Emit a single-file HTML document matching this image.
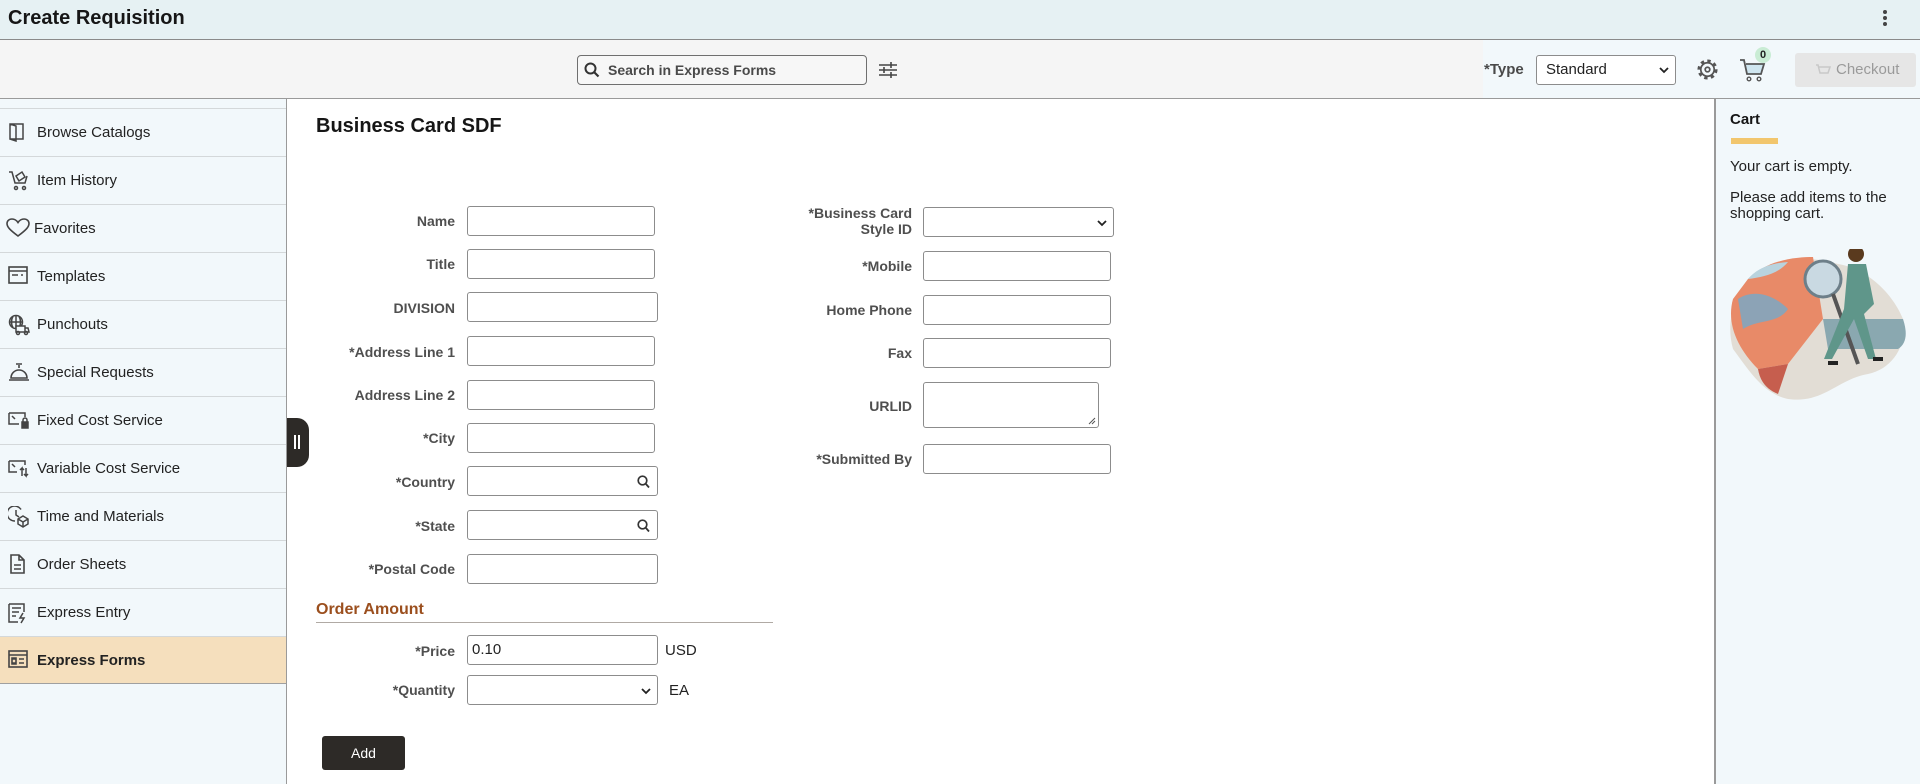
<!DOCTYPE html>
<html><head><meta charset="utf-8"><style>
*{box-sizing:border-box;margin:0;padding:0}
body{width:1920px;height:784px;overflow:hidden;font-family:"Liberation Sans",Arial,sans-serif;background:#fff;position:relative;color:#222}
.a{position:absolute}
#hdr{left:0;top:0;width:1920px;height:40px;background:#e6f1f3;border-bottom:1px solid #8a8a8a}
#tb{left:0;top:40px;width:1920px;height:59px;background:#f5f5f5;border-bottom:1px solid #9a9a9a}
#side{left:0;top:99px;width:287px;height:685px;background:#f2f8fb;border-right:1px solid #9a9a9a}
.it{position:absolute;left:0;width:286px;height:48px;border-top:1px solid #d4d8da;font-size:15px;line-height:47px;padding-left:37px;color:#222}
.it svg{position:absolute;left:8px;top:13px}
.lbl{position:absolute;font-size:14px;font-weight:bold;color:#4f4f4f;text-align:right;width:200px}
.in{position:absolute;height:30px;border:1px solid #8c8c8c;border-radius:3px;background:#fff}
.sel{position:absolute;border:1px solid #8c8c8c;border-radius:3px;background:#fff}
</style></head><body>
<div id="hdr" class="a"><div class="a" style="left:8px;top:7px;font-size:20px;font-weight:bold;color:#161616">Create Requisition</div>
<div class="a" style="left:1883px;top:10px;width:4px"><div style="width:4px;height:4px;border-radius:2px;background:#444;margin-bottom:2px"></div><div style="width:4px;height:4px;border-radius:2px;background:#444;margin-bottom:2px"></div><div style="width:4px;height:4px;border-radius:2px;background:#444"></div></div></div>
<div id="tb" class="a">
<div class="a" style="left:1483px;top:0;width:437px;height:58px;background:#f2f8fb"></div>
<div class="a" style="left:577px;top:15px;width:290px;height:30px;border:1px solid #6f6f6f;border-radius:4px;background:#f7f7f7">
<svg class="a" style="left:6px;top:6px" width="16" height="16" viewBox="0 0 16 16"><circle cx="6.5" cy="6.5" r="5" fill="none" stroke="#333" stroke-width="2"/><path d="M10 10l4.5 4.5" stroke="#333" stroke-width="2.2"/></svg>
<div class="a" style="left:30px;top:6px;font-size:14px;font-weight:bold;color:#4a4a4a">Search in Express Forms</div></div>
<svg class="a" style="left:878px;top:20px" width="20" height="20" viewBox="0 0 20 20" stroke="#444" stroke-width="1.6"><path d="M1 5h18M1 10h18M1 15h18"/><path d="M13 2v6M6 7v6M13 12v6" stroke-width="1.6"/></svg>
<div class="a" style="left:1484px;top:21px;font-size:15px;font-weight:bold;color:#4a4a4a">*Type</div>
<div class="sel" style="left:1536px;top:15px;width:140px;height:30px;font-size:15px;line-height:28px;padding-left:9px">Standard<svg class="a" style="right:6px;top:10px" width="10" height="8" viewBox="0 0 10 8"><path d="M1 2l4 4 4-4" fill="none" stroke="#222" stroke-width="1.8"/></svg></div>
<svg class="a" style="left:1696px;top:18px" width="23" height="23" viewBox="0 0 24 24"><circle cx="12" cy="12" r="8.5" fill="none" stroke="#555" stroke-width="4" stroke-dasharray="3.3 3.3"/><circle cx="12" cy="12" r="7" fill="none" stroke="#555" stroke-width="1.8"/><circle cx="12" cy="12" r="2.4" fill="none" stroke="#555" stroke-width="1.8"/></svg>
<svg class="a" style="left:1739px;top:17px" width="28" height="26" viewBox="0 0 28 26"><path d="M1 3h4l3 14h14l3-10H7" fill="#cfe6f0" stroke="#555" stroke-width="1.8"/><circle cx="10" cy="22" r="1.8" fill="none" stroke="#555" stroke-width="1.4"/><circle cx="20" cy="22" r="1.8" fill="none" stroke="#555" stroke-width="1.4"/></svg>
<div class="a" style="left:1755px;top:7px;width:16px;height:16px;border-radius:8px;background:#c9ecd4;font-size:11px;font-weight:bold;text-align:center;line-height:16px">0</div>
<div class="a" style="left:1795px;top:13px;width:121px;height:34px;background:#e6e6e6;border-radius:3px;font-size:15px;color:#9a9a9a;line-height:34px;padding-left:41px">Checkout</div>
<svg class="a" style="left:1815px;top:23px" width="16" height="14" viewBox="0 0 16 14"><path d="M1 2h2l2 8h8l2-6H4" fill="none" stroke="#c8c8c8" stroke-width="1.5"/></svg>
</div>
<div id="side" class="a">
<div class="it" style="top:9px"><svg width="18" height="20" viewBox="0 0 18 20" fill="none" stroke="#444" stroke-width="1.5"><path d="M2 2h13v15H2zM2 2l6 2v15l-6-2"/></svg>Browse Catalogs</div>
<div class="it" style="top:57px"><svg width="22" height="22" viewBox="0 0 22 22" fill="none" stroke="#444" stroke-width="1.5"><path d="M1 2h3l3 11h10l2-7"/><path d="M8 6l6-4 3 5-6 4z"/><circle cx="8" cy="18" r="1.5"/><circle cx="16" cy="18" r="1.5"/></svg>Item History</div>
<div class="it" style="top:105px;padding-left:34px"><svg style="left:6px" width="24" height="20" viewBox="0 0 24 20" fill="none" stroke="#444" stroke-width="1.6"><path d="M12 18C4 12 1 9 1 5.5 1 3 3 1 6 1c3 0 5 2 6 3.5C13 3 15 1 18 1c3 0 5 2 5 4.5 0 3.5-3 6.5-11 12.5z"/></svg>Favorites</div>
<div class="it" style="top:153px"><svg width="20" height="18" viewBox="0 0 20 18" fill="none" stroke="#444" stroke-width="1.6"><rect x="1" y="1" width="18" height="16"/><path d="M1 5h18M4 9h6M13 9h2"/></svg>Templates</div>
<div class="it" style="top:201px"><svg width="22" height="22" viewBox="0 0 22 22" fill="none" stroke="#444" stroke-width="1.5"><circle cx="8" cy="8" r="6.5"/><path d="M1.5 8h13M8 1.5v13M5 2.5c-2 3-2 8 0 11M11 2.5c2 3 2 8 0 11"/><rect x="8" y="12" width="9" height="6" fill="#f2f8fb"/><path d="M17 14h3l1 4h-4"/><circle cx="10" cy="19" r="1.5"/><circle cx="18" cy="19" r="1.5"/></svg>Punchouts</div>
<div class="it" style="top:249px"><svg width="22" height="20" viewBox="0 0 22 20" fill="none" stroke="#444" stroke-width="1.6"><path d="M3 16a8 8 0 0 1 16 0zM1 18h20M11 3v3M8 2h6"/></svg>Special Requests</div>
<div class="it" style="top:297px"><svg width="22" height="20" viewBox="0 0 22 20" fill="none" stroke="#444" stroke-width="1.5"><path d="M1 3h16v4M1 3v11h10M4 6l3 3"/><rect x="14" y="12" width="6" height="6" fill="#444"/><path d="M15 12v-2a2 2 0 0 1 4 0v2"/></svg>Fixed Cost Service</div>
<div class="it" style="top:345px"><svg width="22" height="20" viewBox="0 0 22 20" fill="none" stroke="#444" stroke-width="1.5"><path d="M1 3h16v4M1 3v11h8M4 6l3 3M14 18v-8l-2 2M14 10l2 2M18 10v8l-2-2M18 18l2-2"/></svg>Variable Cost Service</div>
<div class="it" style="top:393px"><svg width="22" height="22" viewBox="0 0 22 22" fill="none" stroke="#444" stroke-width="1.5"><path d="M13 3.5A7.5 7.5 0 1 0 7 15"/><path d="M8 4v5l3 2"/><path d="M15 10l5 3v5l-5 3-5-3v-5z M10 13l5 3 5-3M15 16v5"/></svg>Time and Materials</div>
<div class="it" style="top:441px"><svg width="18" height="20" viewBox="0 0 18 20" fill="none" stroke="#444" stroke-width="1.6"><path d="M3 1h8l5 5v13H3zM11 1v5h5M6 11h7M6 15h7"/></svg>Order Sheets</div>
<div class="it" style="top:489px"><svg width="20" height="22" viewBox="0 0 20 22" fill="none" stroke="#444" stroke-width="1.5"><path d="M1 2h15v8M1 2v18h9M4 6h9M4 10h7M4 14h4M15 11l-3 5h4l-3 5"/></svg>Express Entry</div>
<div class="it" style="top:537px;background:#f5dfbd;font-weight:bold;border-bottom:1px solid #a0a0a0"><svg width="20" height="18" viewBox="0 0 20 18" fill="none" stroke="#444" stroke-width="1.6"><rect x="1" y="1" width="18" height="16"/><path d="M1 5h18M4 9h4M4 13h4M11 9h5M11 13h5M4 8v6h4V8z"/></svg>Express Forms</div>
</div>
<div class="a" style="left:287px;top:418px;width:22px;height:49px;background:#2d2a27;border-radius:0 12px 12px 0"><div class="a" style="left:7px;top:17px;width:2px;height:14px;background:#fff"></div><div class="a" style="left:11px;top:17px;width:2px;height:14px;background:#fff"></div></div>
<div class="a" style="left:316px;top:115px;font-size:20px;font-weight:bold;color:#161616">Business Card SDF</div>
<!-- left column -->
<div class="lbl" style="left:255px;top:213px">Name</div><div class="in" style="left:467px;top:206px;width:188px"></div>
<div class="lbl" style="left:255px;top:256px">Title</div><div class="in" style="left:467px;top:249px;width:188px"></div>
<div class="lbl" style="left:255px;top:300px">DIVISION</div><div class="in" style="left:467px;top:292px;width:191px"></div>
<div class="lbl" style="left:255px;top:344px">*Address Line 1</div><div class="in" style="left:467px;top:336px;width:188px"></div>
<div class="lbl" style="left:255px;top:387px">Address Line 2</div><div class="in" style="left:467px;top:380px;width:188px"></div>
<div class="lbl" style="left:255px;top:430px">*City</div><div class="in" style="left:467px;top:423px;width:188px"></div>
<div class="lbl" style="left:255px;top:474px">*Country</div><div class="in" style="left:467px;top:466px;width:191px"><svg class="a" style="right:7px;top:8px" width="13" height="14" viewBox="0 0 13 14"><circle cx="5.5" cy="5.5" r="4.3" fill="none" stroke="#333" stroke-width="1.7"/><path d="M8.5 8.5l3.5 4" stroke="#333" stroke-width="1.8"/></svg></div>
<div class="lbl" style="left:255px;top:518px">*State</div><div class="in" style="left:467px;top:510px;width:191px"><svg class="a" style="right:7px;top:8px" width="13" height="14" viewBox="0 0 13 14"><circle cx="5.5" cy="5.5" r="4.3" fill="none" stroke="#333" stroke-width="1.7"/><path d="M8.5 8.5l3.5 4" stroke="#333" stroke-width="1.8"/></svg></div>
<div class="lbl" style="left:255px;top:561px">*Postal Code</div><div class="in" style="left:467px;top:554px;width:191px"></div>
<div class="a" style="left:316px;top:601px;font-size:16px;font-weight:bold;color:#9b4f1e">Order Amount</div>
<div class="a" style="left:316px;top:622px;width:457px;height:1px;background:#b0aaa4"></div>
<div class="lbl" style="left:255px;top:643px">*Price</div><div class="in" style="left:467px;top:635px;width:191px;font-size:15px;line-height:28px;padding-left:4px">0.10</div>
<div class="a" style="left:665px;top:642px;font-size:15px">USD</div>
<div class="lbl" style="left:255px;top:682px">*Quantity</div><div class="sel" style="left:467px;top:675px;width:191px;height:30px"><svg class="a" style="right:6px;top:11px" width="10" height="8" viewBox="0 0 10 8"><path d="M1 2l4 4 4-4" fill="none" stroke="#222" stroke-width="1.8"/></svg></div>
<div class="a" style="left:669px;top:682px;font-size:15px">EA</div>
<div class="a" style="left:322px;top:736px;width:83px;height:34px;background:#2d2a27;border-radius:3px;color:#fff;font-size:14px;text-align:center;line-height:34px">Add</div>
<!-- right column -->
<div class="lbl" style="left:712px;top:205px;line-height:16px">*Business Card<br>Style ID</div><div class="sel" style="left:923px;top:207px;width:191px;height:30px"><svg class="a" style="right:6px;top:11px" width="10" height="8" viewBox="0 0 10 8"><path d="M1 2l4 4 4-4" fill="none" stroke="#222" stroke-width="1.8"/></svg></div>
<div class="lbl" style="left:712px;top:258px">*Mobile</div><div class="in" style="left:923px;top:251px;width:188px"></div>
<div class="lbl" style="left:712px;top:302px">Home Phone</div><div class="in" style="left:923px;top:295px;width:188px"></div>
<div class="lbl" style="left:712px;top:345px">Fax</div><div class="in" style="left:923px;top:338px;width:188px"></div>
<div class="lbl" style="left:712px;top:398px">URLID</div><div class="in" style="left:923px;top:382px;width:176px;height:46px"><svg class="a" style="right:2px;bottom:2px" width="8" height="8" viewBox="0 0 8 8"><path d="M7 1L1 7M7 4L4 7" stroke="#555" stroke-width="1"/></svg></div>
<div class="lbl" style="left:712px;top:451px">*Submitted By</div><div class="in" style="left:923px;top:444px;width:188px"></div>
<!-- cart panel -->
<div class="a" style="left:1714px;top:99px;width:206px;height:685px;background:#f2f8fb;border-left:2px solid #9a9a9a">
<div class="a" style="left:14px;top:12px;font-size:15px;font-weight:bold;color:#161616">Cart</div>
<div class="a" style="left:15px;top:39px;width:47px;height:6px;background:#f2c66d"></div>
<div class="a" style="left:14px;top:59px;font-size:15px;color:#222">Your cart is empty.</div>
<div class="a" style="left:14px;top:91px;font-size:15px;color:#222;line-height:16px;width:190px">Please add items to the shopping cart.</div>
<svg class="a" style="left:12px;top:150px" width="180" height="156" viewBox="0 0 180 156">
<path d="M20 30C40 10 80 5 110 15 140 20 165 45 175 70 180 95 165 120 140 125 110 130 95 155 60 150 35 145 20 120 5 100 -2 75 5 50 20 30z" fill="#e2ddd5"/>
<path d="M20 30C40 10 70 8 85 8L95 70 60 115 30 120C10 100 -2 75 5 50z" fill="#e88a68"/>
<path d="M10 50C25 40 45 45 60 60 50 75 30 70 15 80z" fill="#7ba7c4" opacity=".85"/>
<path d="M95 70L175 70C180 85 178 95 170 100L100 100z" fill="#8aa8b0"/>
<path d="M20 30C30 18 45 14 60 13 50 25 35 28 20 30z" fill="#b9d3de"/>
<path d="M30 120L60 115 50 145C38 140 32 132 30 120z" fill="#c65e4e"/>
<circle cx="95" cy="30" r="18" fill="#c9d9e2" stroke="#6d7f89" stroke-width="3"/>
<path d="M105 45l25 70" stroke="#555" stroke-width="4"/>
<circle cx="128" cy="5" r="8" fill="#5a3a1e"/>
<path d="M120 15h18l8 40-10 10 12 45h-8l-14-40-22 40h-8l20-50z" fill="#5f968a"/>
<path d="M100 112h10v4h-10zM145 108h10v4h-10z" fill="#222"/>
</svg>
</div>
</body></html>
